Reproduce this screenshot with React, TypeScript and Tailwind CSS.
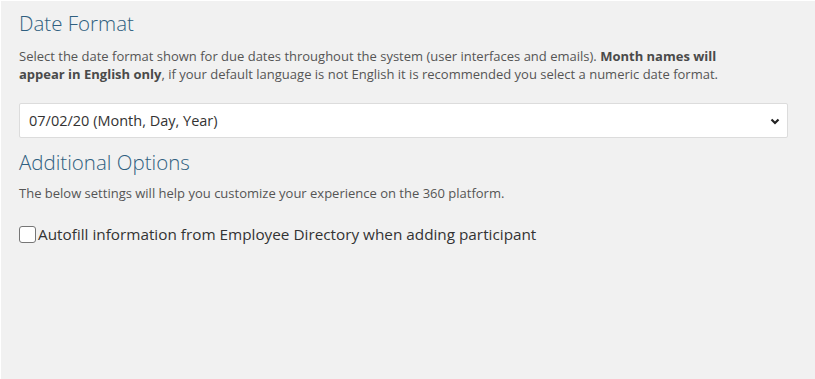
const App = () => {
  return (
    <div
      className="w-[815px] h-[379px] bg-[#f1f1f1] border-t border-l border-white pl-[18px] pr-[27px] pt-[8px] text-[#555]"
      style={{ fontFamily: '"Open Sans", sans-serif' }}
    >
      <h2 className="text-[20.5px] leading-[28px] font-light text-[#2f5f80]">Date Format</h2>
      <p className="mt-[10px] w-[735px] text-[13px] leading-[18px]">
        Select the date format shown for due dates throughout the system (user interfaces and emails).{' '}
        <strong className="font-bold text-[#4a4a4a]">Month names will appear in English only</strong>, if your default
        language is not English it is recommended you select a numeric date format.
      </p>
      <div className="mt-[20px] h-[35px] bg-white border border-[#dcdcdc] rounded-[2px] flex items-center justify-between pl-[9px] pr-[6px] text-[14.5px] text-[#333]">
        <span>07/02/20 (Month, Day, Year)</span>
        <svg width="12" height="12" viewBox="0 0 12 12" className="text-[#222]">
          <path d="M2.5 4.5l3.5 3.5 3.5-3.5" fill="none" stroke="currentColor" strokeWidth="2.2" />
        </svg>
      </div>
      <h2 className="mt-[10px] text-[20.5px] leading-[28px] font-light text-[#2f5f80]">Additional Options</h2>
      <p className="mt-[8px] text-[13px] leading-[18px]">
        The below settings will help you customize your experience on the 360 platform.
      </p>
      <label className="mt-[21px] flex items-center text-[15.3px] text-[#333]">
        <span className="w-[17px] h-[17px] bg-white border border-[#767676] rounded-[3px] mr-[2px]" />
        Autofill information from Employee Directory when adding participant
      </label>
    </div>
  );
};

export default App;
